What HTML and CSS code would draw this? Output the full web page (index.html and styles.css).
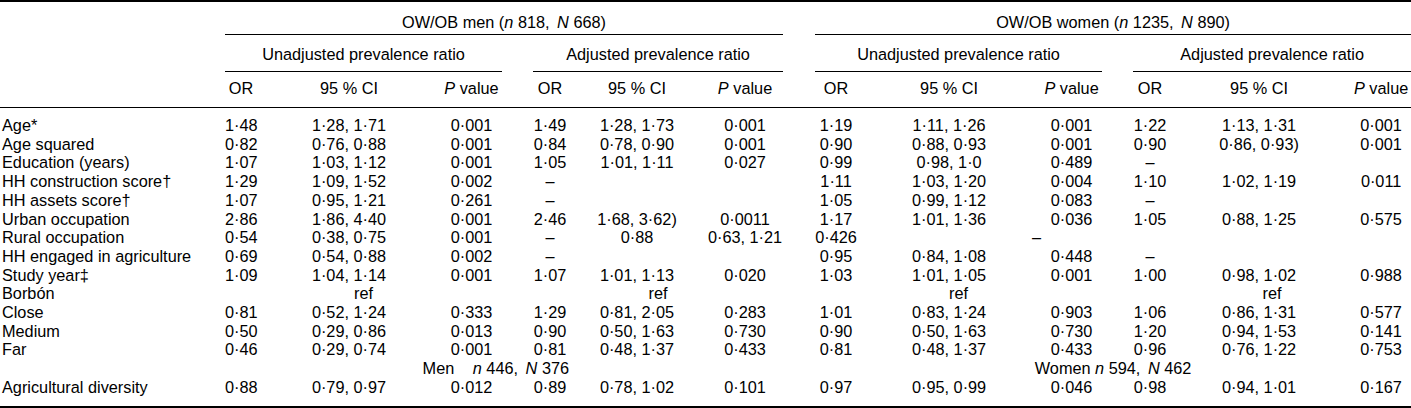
FILE: index.html
```html
<!DOCTYPE html>
<html lang="en">
<head>
<meta charset="utf-8">
<title>Prevalence ratios</title>
<link rel="stylesheet" href="styles.css">
</head>
<body>
<table class="results">
  <colgroup>
    <col class="w-label">
    <col class="w-or1"><col class="w-ci"><col class="w-p1">
    <col class="w-gap">
    <col class="w-or2"><col class="w-ci2"><col class="w-p2">
    <col class="w-gap2">
    <col class="w-or3"><col class="w-ci"><col class="w-p1">
    <col class="w-gap">
    <col class="w-or2"><col class="w-ci"><col class="w-p4">
  </colgroup>
  <thead>
    <tr class="h-group">
      <th class="h-label" rowspan="3"></th>
      <th class="ul" colspan="7">OW/OB men (<i>n</i> 818, <i class="bigN">N</i> 668)</th>
      <th></th>
      <th class="ul" colspan="7">OW/OB women (<i>n</i> 1235, <i class="bigN">N</i> 890)</th>
    </tr>
    <tr class="h-sub">
      <th class="ul" colspan="3">Unadjusted prevalence ratio</th>
      <th></th>
      <th class="ul" colspan="3">Adjusted prevalence ratio</th>
      <th></th>
      <th class="ul" colspan="3">Unadjusted prevalence ratio</th>
      <th></th>
      <th class="ul" colspan="3">Adjusted prevalence ratio</th>
    </tr>
    <tr class="h-cols">
      <th>OR</th><th>95 % CI</th><th><i>P</i> value</th>
      <th></th>
      <th>OR</th><th>95 % CI</th><th><i>P</i> value</th>
      <th></th>
      <th>OR</th><th>95 % CI</th><th><i>P</i> value</th>
      <th></th>
      <th>OR</th><th>95 % CI</th><th><i>P</i> value</th>
    </tr>
  </thead>
  <tbody>
    <tr>
      <td class="lab">Age*</td>
      <td>1·48</td><td>1·28, 1·71</td><td>0·001</td><td></td>
      <td>1·49</td><td>1·28, 1·73</td><td>0·001</td><td></td>
      <td>1·19</td><td>1·11, 1·26</td><td>0·001</td><td></td>
      <td>1·22</td><td>1·13, 1·31</td><td>0·001</td>
    </tr>
    <tr>
      <td class="lab">Age squared</td>
      <td>0·82</td><td>0·76, 0·88</td><td>0·001</td><td></td>
      <td>0·84</td><td>0·78, 0·90</td><td>0·001</td><td></td>
      <td>0·90</td><td>0·88, 0·93</td><td>0·001</td><td></td>
      <td>0·90</td><td>0·86, 0·93)</td><td>0·001</td>
    </tr>
    <tr>
      <td class="lab">Education (years)</td>
      <td>1·07</td><td>1·03, 1·12</td><td>0·001</td><td></td>
      <td>1·05</td><td>1·01, 1·11</td><td>0·027</td><td></td>
      <td>0·99</td><td>0·98, 1·0</td><td>0·489</td><td></td>
      <td>–</td><td></td><td></td>
    </tr>
    <tr>
      <td class="lab">HH construction score†</td>
      <td>1·29</td><td>1·09, 1·52</td><td>0·002</td><td></td>
      <td>–</td><td></td><td></td><td></td>
      <td>1·11</td><td>1·03, 1·20</td><td>0·004</td><td></td>
      <td>1·10</td><td>1·02, 1·19</td><td>0·011</td>
    </tr>
    <tr>
      <td class="lab">HH assets score†</td>
      <td>1·07</td><td>0·95, 1·21</td><td>0·261</td><td></td>
      <td>–</td><td></td><td></td><td></td>
      <td>1·05</td><td>0·99, 1·12</td><td>0·083</td><td></td>
      <td>–</td><td></td><td></td>
    </tr>
    <tr>
      <td class="lab">Urban occupation</td>
      <td>2·86</td><td>1·86, 4·40</td><td>0·001</td><td></td>
      <td>2·46</td><td>1·68, 3·62)</td><td>0·0011</td><td></td>
      <td>1·17</td><td>1·01, 1·36</td><td>0·036</td><td></td>
      <td>1·05</td><td>0·88, 1·25</td><td>0·575</td>
    </tr>
    <tr>
      <td class="lab">Rural occupation</td>
      <td>0·54</td><td>0·38, 0·75</td><td>0·001</td><td></td>
      <td>–</td><td>0·88</td><td>0·63, 1·21</td><td></td>
      <td>0·426</td><td class="right">–</td><td></td><td></td>
      <td></td><td></td><td></td>
    </tr>
    <tr>
      <td class="lab">HH engaged in agriculture</td>
      <td>0·69</td><td>0·54, 0·88</td><td>0·002</td><td></td>
      <td>–</td><td></td><td></td><td></td>
      <td>0·95</td><td>0·84, 1·08</td><td>0·448</td><td></td>
      <td>–</td><td></td><td></td>
    </tr>
    <tr>
      <td class="lab">Study year‡</td>
      <td>1·09</td><td>1·04, 1·14</td><td>0·001</td><td></td>
      <td>1·07</td><td>1·01, 1·13</td><td>0·020</td><td></td>
      <td>1·03</td><td>1·01, 1·05</td><td>0·001</td><td></td>
      <td>1·00</td><td>0·98, 1·02</td><td>0·988</td>
    </tr>
    <tr>
      <td class="lab">Borbón</td>
      <td colspan="3">ref</td><td></td>
      <td colspan="3">ref</td><td></td>
      <td colspan="3">ref</td><td></td>
      <td colspan="3">ref</td>
    </tr>
    <tr>
      <td class="lab">Close</td>
      <td>0·81</td><td>0·52, 1·24</td><td>0·333</td><td></td>
      <td>1·29</td><td>0·81, 2·05</td><td>0·283</td><td></td>
      <td>1·01</td><td>0·83, 1·24</td><td>0·903</td><td></td>
      <td>1·06</td><td>0·86, 1·31</td><td>0·577</td>
    </tr>
    <tr>
      <td class="lab">Medium</td>
      <td>0·50</td><td>0·29, 0·86</td><td>0·013</td><td></td>
      <td>0·90</td><td>0·50, 1·63</td><td>0·730</td><td></td>
      <td>0·90</td><td>0·50, 1·63</td><td>0·730</td><td></td>
      <td>1·20</td><td>0·94, 1·53</td><td>0·141</td>
    </tr>
    <tr>
      <td class="lab">Far</td>
      <td>0·46</td><td>0·29, 0·74</td><td>0·001</td><td></td>
      <td>0·81</td><td>0·48, 1·37</td><td>0·433</td><td></td>
      <td>0·81</td><td>0·48, 1·37</td><td>0·433</td><td></td>
      <td>0·96</td><td>0·76, 1·22</td><td>0·753</td>
    </tr>
    <tr>
      <td class="lab"></td>
      <td class="men-n" colspan="7">Men <i class="smallN">n</i> 446, <i class="bigN">N</i> 376</td>
      <td></td>
      <td colspan="7">Women <i>n</i> 594, <i class="bigN">N</i> 462</td>
    </tr>
    <tr>
      <td class="lab">Agricultural diversity</td>
      <td>0·88</td><td>0·79, 0·97</td><td>0·012</td><td></td>
      <td>0·89</td><td>0·78, 1·02</td><td>0·101</td><td></td>
      <td>0·97</td><td>0·95, 0·99</td><td>0·046</td><td></td>
      <td>0·98</td><td>0·94, 1·01</td><td>0·167</td>
    </tr>
  </tbody>
</table>
</body>
</html>
```

FILE: styles.css
```css
html, body {
  margin: 0;
  padding: 0;
  background: #ffffff;
}

.results {
  width: 1411px;
  table-layout: fixed;
  border-collapse: separate;
  border-spacing: 0;
  border-top: 2px solid #000;
  border-bottom: 2px solid #000;
  font-family: "Liberation Sans", Arial, Helvetica, sans-serif;
  font-size: 16.3px;
  line-height: 18.7px;
  color: #000;
}

.w-label { width: 225px; }
.w-or1 { width: 32px; }
.w-ci { width: 184px; }
.w-p1 { width: 61px; }
.w-gap { width: 31px; }
.w-or2 { width: 34px; }
.w-ci2 { width: 140px; }
.w-p2 { width: 76px; }
.w-gap2 { width: 32px; }
.w-or3 { width: 42px; }
.w-p4 { width: 60px; }

.results th {
  font-weight: normal;
  text-align: center;
  padding: 0;
  white-space: nowrap;
}

.results td {
  text-align: center;
  padding: 0;
  white-space: nowrap;
}

.results td.lab {
  text-align: left;
  padding-left: 2px;
}

.results td.right {
  text-align: right;
}

.results td.men-n {
  text-align: right;
  padding-right: 214px;
}

.h-group th {
  padding-top: 11px;
  padding-bottom: 2.3px;
}

.h-sub th {
  padding-top: 10px;
  padding-bottom: 7.3px;
}

.h-cols th {
  padding-top: 7px;
  padding-bottom: 9.3px;
  border-bottom: 1px solid #000;
}

.results th.ul {
  border-bottom: 1px solid #000;
}

.results th.h-label {
  border-bottom: 1px solid #000;
}

.results tbody tr:first-child td {
  padding-top: 8px;
}

.results tbody tr:last-child td {
  padding-bottom: 9.5px;
}

.bigN {
  margin-left: 3px;
}

.smallN {
  margin-left: 14px;
}
```
